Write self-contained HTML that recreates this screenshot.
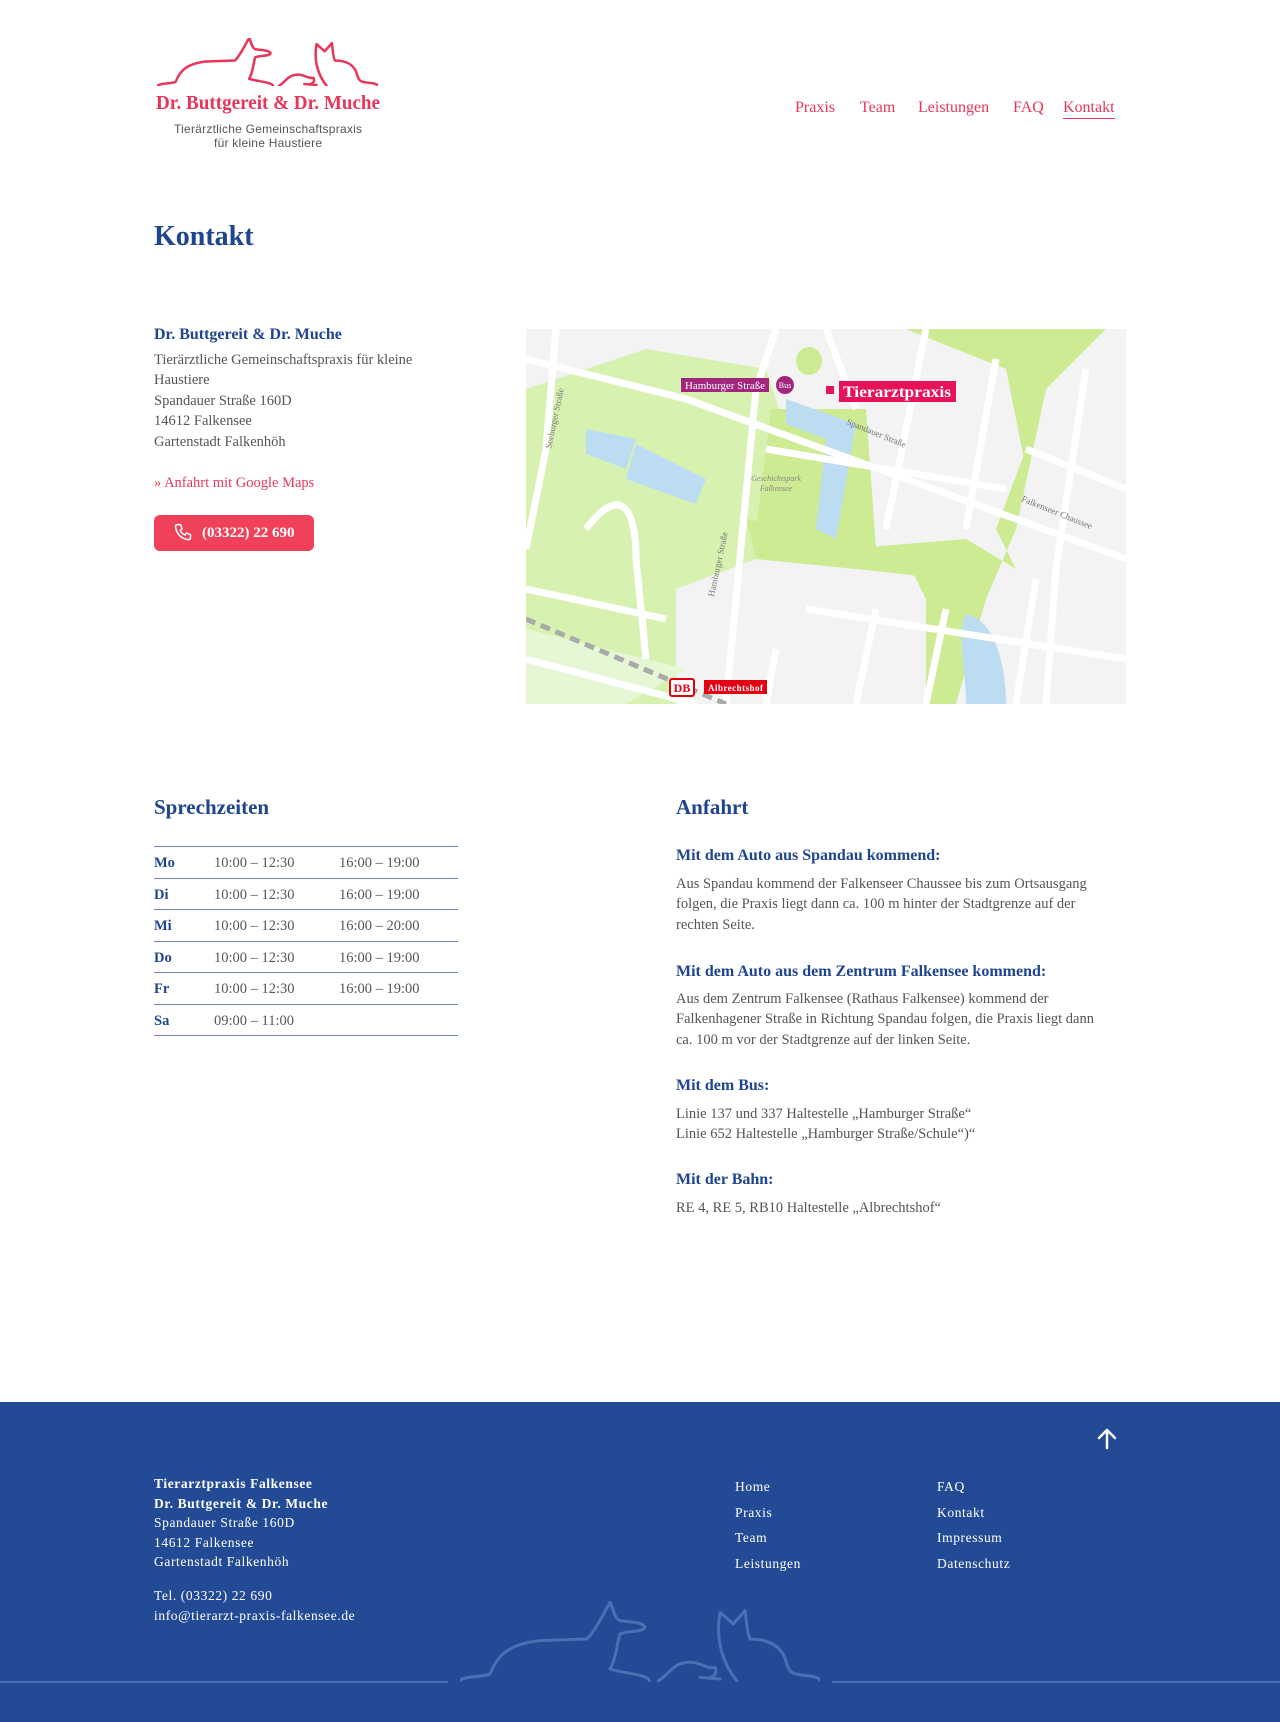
<!DOCTYPE html>
<html><head><meta charset="utf-8">
<style>
*{margin:0;padding:0;box-sizing:border-box}
body{width:1280px;height:1722px;position:relative;background:#fff;font-family:"Liberation Serif",serif;color:#555;overflow:hidden}
.a{position:absolute;white-space:nowrap}
.blue{color:#1f4490}
.red{color:#e8365a}
.nav{font-size:16px;color:#e8365a;top:99px}
h1,h2,h3{font-weight:bold}
.t{font-size:14.5px;line-height:20.4px}
.row{position:absolute;left:154px;width:304px;height:31.5px;border-bottom:1.5px solid #6f86b8;font-size:14.5px}
.row span{position:absolute;top:8px}
.f{color:#fff;font-size:13.5px;letter-spacing:.6px}
.h{font-size:16px;font-weight:bold}
</style></head><body>
<svg class="a" style="left:157px;top:38px" width="221" height="48" viewBox="60 65 1080 235" fill="none" stroke="#e8365a" stroke-linecap="round" stroke-linejoin="round">
<path vector-effect="non-scaling-stroke" stroke-width="2.5" d="M60,300 C70,285 130,290 150,280 C170,230 200,190 300,180 L440,175 C460,160 490,100 510,65 C520,80 520,110 540,120 C580,125 610,125 615,140 C610,155 560,150 540,160 C530,190 530,230 510,265 C560,280 620,280 628,300"/><path vector-effect="non-scaling-stroke" stroke-width="2.5" d="M655,300 C690,280 700,240 760,245 C790,250 800,265 825,260 C830,270 830,285 810,290 M780,290 L840,295"/><path vector-effect="non-scaling-stroke" stroke-width="2.5" d="M890,300 C850,250 825,180 840,95 L880,130 L915,90 C920,120 920,155 930,175 C990,175 1030,200 1040,250 C1050,280 1060,280 1100,285 C1130,287 1140,295 1140,300"/></svg>
<svg class="a" style="left:155px;top:89px" width="230" height="60"><text x="1" y="20" font-family="Liberation Serif" font-size="20" font-weight="bold" fill="#e8365a" textLength="224" lengthAdjust="spacingAndGlyphs">Dr. Buttgereit &amp; Dr. Muche</text><text x="113" y="44" text-anchor="middle" font-family="Liberation Sans" font-size="12" fill="#555" textLength="188">Tierärztliche Gemeinschaftspraxis</text><text x="113" y="58" text-anchor="middle" font-family="Liberation Sans" font-size="12" fill="#555" textLength="108">für kleine Haustiere</text></svg>

<div class="a nav" style="left:795px">Praxis</div>
<div class="a nav" style="left:860px">Team</div>
<div class="a nav" style="left:918px">Leistungen</div>
<div class="a nav" style="left:1013px">FAQ</div>
<div class="a nav" style="left:1063px;border-bottom:1.5px solid #e8365a;padding-bottom:1px">Kontakt</div>

<h1 class="a blue" style="left:154px;top:221px;font-size:28px">Kontakt</h1>

<div class="a blue h" style="left:154px;top:326px">Dr. Buttgereit &amp; Dr. Muche</div>
<div class="a t" style="left:154px;top:350px">Tierärztliche Gemeinschaftspraxis für kleine<br>Haustiere<br>Spandauer Straße 160D<br>14612 Falkensee<br>Gartenstadt Falkenhöh</div>
<div class="a red t" style="left:154px;top:473px">» Anfahrt mit Google Maps</div>
<div class="a" style="left:154px;top:515px;width:160px;height:36px;background:#f0405a;border-radius:6px;color:#fff;font-size:15px;font-weight:bold;line-height:36px;padding-left:48px">(03322) 22 690</div>
<svg class="a" style="left:173px;top:523px" width="20" height="20" viewBox="0 0 24 24" fill="none" stroke="#fff" stroke-width="1.8" stroke-linejoin="round"><path d="M5 2h4l2 5-2.5 1.5a11 11 0 0 0 6 6L16 12l5 2v4a2 2 0 0 1-2 2A17 17 0 0 1 3 4a2 2 0 0 1 2-2z"/></svg>

<svg class="a" style="left:526px;top:329px" width="600" height="375" viewBox="0 0 600 375" font-family="Liberation Serif">
<rect width="600" height="375" fill="#f3f3f3"/>
<path d="M0,60 L120,20 L240,40 L260,100 L240,180 L230,230 L150,260 L150,375 L0,375Z" fill="#d7f2b0"/>
<path d="M0,300 L0,375 L100,375 L160,340Z" fill="#e6f7d6"/>
<path d="M245,80 L340,80 L350,220 L320,220 L440,210 L490,240 L470,200 L500,120 L480,40 L380,0 L580,0 L520,60 L490,200 L460,270 L430,375 L400,375 L400,270 L380,230 L300,230 L230,200Z" fill="#cdeb92"/>
<path d="M380,0 L570,0 L520,60 L500,140 L480,40Z" fill="#cdeb92"/>
<path d="M220,190 L400,230 L440,210 L420,250 L330,240 L230,230Z" fill="#cdeb92"/>
<path d="M60,100 L110,110 L100,140 L60,125Z M110,115 L180,150 L170,175 L100,150Z" fill="#bcdcf2"/>
<path d="M260,70 L330,95 L310,210 L290,200 L300,110 L260,95Z" fill="#bcdcf2"/>
<path d="M440,285 C470,290 480,340 480,375 L440,375 C440,340 430,300 440,285Z" fill="#bcdcf2"/>
<ellipse cx="283" cy="32" rx="13" ry="14" fill="#cdeb92"/>
<g stroke="#fff" stroke-width="7" fill="none">
<path d="M0,30 L160,70 L600,230"/><path d="M250,0 L230,60 L200,375"/><path d="M30,0 L20,120 L0,220"/>
<path d="M400,0 L360,200"/><path d="M470,30 L440,200"/><path d="M560,40 L530,240 L520,375"/>
<path d="M280,280 L600,330"/><path d="M350,280 L330,375"/><path d="M420,280 L400,375"/><path d="M510,250 L490,375"/>
<path d="M60,200 C90,160 110,170 110,230 L120,330"/><path d="M0,260 L140,290"/><path d="M500,120 L600,160"/><path d="M300,0 L330,80"/>
<path d="M240,120 L480,160"/><path d="M0,330 L170,375"/><path d="M250,320 L240,375"/></g>
<path d="M0,290 L200,375" stroke="#aaa" stroke-width="5" stroke-dasharray="10 6"/>
<rect x="155" y="49" width="88" height="14" fill="#a3267e"/><text x="159" y="60" font-size="10" fill="#fff" textLength="80" lengthAdjust="spacingAndGlyphs">Hamburger Straße</text>
<circle cx="259" cy="56" r="9" fill="#a3267e"/><text x="259" y="59" font-size="8" fill="#fff" text-anchor="middle">Bus</text>
<rect x="300" y="57" width="8" height="8" fill="#e6125c"/>
<rect x="313" y="52" width="117" height="21" fill="#e6125c"/><text x="317" y="68" font-size="16" font-weight="bold" fill="#fff" textLength="108" lengthAdjust="spacingAndGlyphs">Tierarztpraxis</text>
<text x="250" y="152" font-size="8" fill="#888" font-style="italic" text-anchor="middle">Geschichtspark</text><text x="250" y="162" font-size="8" fill="#888" font-style="italic" text-anchor="middle">Falkensee</text>
<text font-size="9" fill="#777" transform="translate(320,95) rotate(22)">Spandauer Straße</text>
<text font-size="9" fill="#777" transform="translate(495,172) rotate(22)">Falkenseer Chaussee</text>
<text font-size="9" fill="#777" transform="translate(25,120) rotate(-78)">Seeburger Straße</text>
<text font-size="9" fill="#777" transform="translate(188,268) rotate(-78)">Hamburger Straße</text>
<rect x="144" y="350" width="24" height="17" fill="#fff" stroke="#e30013" stroke-width="2" rx="2"/><text x="156" y="363" font-size="12" font-weight="bold" fill="#e30013" text-anchor="middle">DB</text>
<rect x="178" y="351" width="63" height="14" fill="#e30013"/><text x="182" y="362" font-size="9" fill="#fff" font-weight="bold" textLength="55">Albrechtshof</text>
</svg>

<h2 class="a blue" style="left:154px;top:795px;font-size:21px">Sprechzeiten</h2>
<div class="a" style="left:154px;top:846px;width:304px;border-top:1.5px solid #6f86b8"></div>
<div class="row" style="top:847px"><span class="blue" style="left:0;font-weight:bold">Mo</span><span style="left:60px">10:00 – 12:30</span><span style="left:185px">16:00 – 19:00</span></div>
<div class="row" style="top:878.5px"><span class="blue" style="left:0;font-weight:bold">Di</span><span style="left:60px">10:00 – 12:30</span><span style="left:185px">16:00 – 19:00</span></div>
<div class="row" style="top:910px"><span class="blue" style="left:0;font-weight:bold">Mi</span><span style="left:60px">10:00 – 12:30</span><span style="left:185px">16:00 – 20:00</span></div>
<div class="row" style="top:941.5px"><span class="blue" style="left:0;font-weight:bold">Do</span><span style="left:60px">10:00 – 12:30</span><span style="left:185px">16:00 – 19:00</span></div>
<div class="row" style="top:973px"><span class="blue" style="left:0;font-weight:bold">Fr</span><span style="left:60px">10:00 – 12:30</span><span style="left:185px">16:00 – 19:00</span></div>
<div class="row" style="top:1004.5px"><span class="blue" style="left:0;font-weight:bold">Sa</span><span style="left:60px">09:00 – 11:00</span></div>

<h2 class="a blue" style="left:676px;top:795px;font-size:21px">Anfahrt</h2>
<div class="a blue h" style="left:676px;top:847px">Mit dem Auto aus Spandau kommend:</div>
<div class="a t" style="left:676px;top:874px">Aus Spandau kommend der Falkenseer Chaussee bis zum Ortsausgang<br>folgen, die Praxis liegt dann ca. 100 m hinter der Stadtgrenze auf der<br>rechten Seite.</div>
<div class="a blue h" style="left:676px;top:963px">Mit dem Auto aus dem Zentrum Falkensee kommend:</div>
<div class="a t" style="left:676px;top:989px">Aus dem Zentrum Falkensee (Rathaus Falkensee) kommend der<br>Falkenhagener Straße in Richtung Spandau folgen, die Praxis liegt dann<br>ca. 100 m vor der Stadtgrenze auf der linken Seite.</div>
<div class="a blue h" style="left:676px;top:1077px">Mit dem Bus:</div>
<div class="a t" style="left:676px;top:1104px">Linie 137 und 337 Haltestelle „Hamburger Straße“<br>Linie 652 Haltestelle „Hamburger Straße/Schule“)“</div>
<div class="a blue h" style="left:676px;top:1171px">Mit der Bahn:</div>
<div class="a t" style="left:676px;top:1198px">RE 4, RE 5, RB10 Haltestelle „Albrechtshof“</div>

<div class="a" style="left:0;top:1402px;width:1280px;height:320px;background:#234a94"></div>
<svg class="a" style="left:1096px;top:1428px" width="22" height="22" viewBox="0 0 22 22" fill="none" stroke="#fff" stroke-width="2.5" stroke-linecap="round" stroke-linejoin="round"><path d="M11 20V3M3 10l8-8 8 8"/></svg>
<div class="a f" style="left:154px;top:1474px;line-height:19.5px"><b>Tierarztpraxis Falkensee</b><br><b>Dr. Buttgereit &amp; Dr. Muche</b><br>Spandauer Straße 160D<br>14612 Falkensee<br>Gartenstadt Falkenhöh</div>
<div class="a f" style="left:154px;top:1586px;line-height:19.5px">Tel. (03322) 22 690<br>info@tierarzt-praxis-falkensee.de</div>
<div class="a f" style="left:735px;top:1474px;line-height:25.7px">Home<br>Praxis<br>Team<br>Leistungen</div>
<div class="a f" style="left:937px;top:1474px;line-height:25.7px">FAQ<br>Kontakt<br>Impressum<br>Datenschutz</div>
<div class="a" style="left:0;top:1681px;width:448px;height:2px;background:#4a70b4"></div>
<div class="a" style="left:832px;top:1681px;width:448px;height:2px;background:#4a70b4"></div>
<svg class="a" style="left:460px;top:1601px" width="360" height="81" viewBox="60 65 1080 235" fill="none" stroke="#4a70b4" stroke-linecap="round" stroke-linejoin="round">
<path vector-effect="non-scaling-stroke" stroke-width="3" d="M60,300 C70,285 130,290 150,280 C170,230 200,190 300,180 L440,175 C460,160 490,100 510,65 C520,80 520,110 540,120 C580,125 610,125 615,140 C610,155 560,150 540,160 C530,190 530,230 510,265 C560,280 620,280 628,300"/><path vector-effect="non-scaling-stroke" stroke-width="3" d="M655,300 C690,280 700,240 760,245 C790,250 800,265 825,260 C830,270 830,285 810,290 M780,290 L840,295"/><path vector-effect="non-scaling-stroke" stroke-width="3" d="M890,300 C850,250 825,180 840,95 L880,130 L915,90 C920,120 920,155 930,175 C990,175 1030,200 1040,250 C1050,280 1060,280 1100,285 C1130,287 1140,295 1140,300"/></svg>
</body></html>
